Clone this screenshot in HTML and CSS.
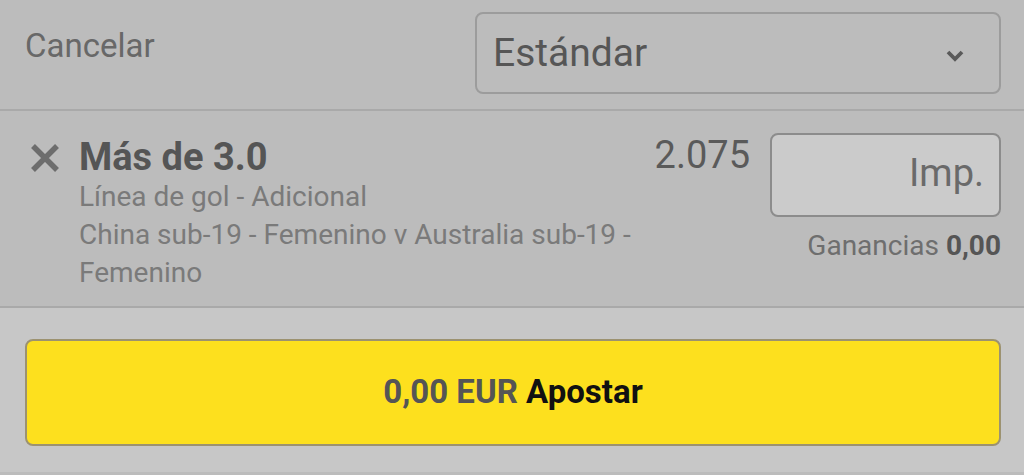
FILE: index.html
```html
<!DOCTYPE html>
<html lang="es">
<head>
    <meta charset="UTF-8">
    <meta name="viewport" content="width=device-width, initial-scale=1.0">
    <title>Boleto de apuestas</title>
    <link rel="stylesheet" href="styles.css">
</head>
<body>

<div class="slip">
    <div class="slip-header">
        <a class="cancel" href="#">Cancelar</a>
        <div class="bet-type">
            <span>Estándar</span>
            <svg class="chevron" width="20" height="13" viewBox="0 0 20 13">
                <path d="M3 3 L10 10 L17 3" fill="none" stroke="#5a5a5a" stroke-width="3.8"/>
            </svg>
        </div>
    </div>

    <div class="selection">
        <svg class="remove" width="30" height="28" viewBox="0 0 30 28">
            <path d="M3 2 L27 26 M27 2 L3 26" stroke="#6d6d6d" stroke-width="5.5"/>
        </svg>
        <div class="details">
            <div class="title">Más de 3.0</div>
            <div class="market">Línea de gol - Adicional</div>
            <div class="event">China sub-19 - Femenino v Australia sub-19 - Femenino</div>
        </div>
        <div class="odds">2.075</div>
        <div class="stake-col">
            <div class="stake">Imp.</div>
            <div class="returns">Ganancias <b>0,00</b></div>
        </div>
    </div>

    <div class="slip-footer">
        <button class="place-bet"><span class="amount">0,00 EUR</span> Apostar</button>
    </div>
</div>

</body>
</html>
```

FILE: styles.css
```css
body {
    margin: 0;
    font-family: Roboto, "Noto Sans", Arial, sans-serif;
    background-color: #bcbcbc;
    width: 1024px;
    height: 475px;
    overflow: hidden;
}

.slip-header {
    display: flex;
    justify-content: space-between;
    align-items: flex-start;
    height: 111px;
    padding: 12px 23px 0 25px;
    box-sizing: border-box;
    border-bottom: 2px solid #a9a9a9;
}

.cancel {
    color: #686868;
    font-size: 33px;
    text-decoration: none;
    margin-top: 14px;
}

.bet-type {
    width: 526px;
    height: 82px;
    box-sizing: border-box;
    border: 2px solid #9c9c9c;
    border-radius: 8px;
    display: flex;
    align-items: center;
    justify-content: space-between;
    padding: 0 34px 0 16px;
    color: #565656;
    font-size: 39px;
}

.chevron {
    margin-top: 4px;
}

.selection {
    display: flex;
    align-items: flex-start;
    height: 197px;
    box-sizing: border-box;
    padding: 24px 23px 0 30px;
    border-bottom: 2px solid #a9a9a9;
}

.remove {
    margin-top: 9px;
    flex: none;
}

.details {
    margin-left: 19px;
    width: 580px;
}

.title {
    font-size: 38px;
    font-weight: bold;
    color: #555;
    line-height: 44px;
}

.market,
.event {
    font-size: 28px;
    color: #7a7a7a;
    line-height: 38px;
}

.market {
    margin-top: -1px;
}

.odds {
    flex: 1;
    text-align: right;
    font-size: 38px;
    color: #5a5a5a;
    margin-top: -2px;
    margin-right: 20px;
}

.stake-col {
    width: 231px;
    margin-top: -2px;
    display: flex;
    flex-direction: column;
    align-items: flex-end;
}

.stake {
    width: 231px;
    height: 84px;
    box-sizing: border-box;
    background-color: #cbcbcb;
    border: 2px solid #8c8c8c;
    border-radius: 8px;
    text-align: right;
    padding: 16px 15px 0 0;
    font-size: 38px;
    color: #6a6a6a;
}

.returns {
    margin-top: 12px;
    font-size: 28px;
    color: #6e6e6e;
}

.returns b {
    color: #555;
}

.slip-footer {
    background-color: #c7c7c7;
    height: 164px;
    padding: 31px 23px 0 25px;
    box-sizing: border-box;
}

.place-bet {
    width: 100%;
    height: 107px;
    padding-bottom: 4px;
    background-color: #fde01e;
    border: 2px solid #9c9270;
    border-radius: 8px;
    font-family: Roboto, "Noto Sans", Arial, sans-serif;
    font-size: 33px;
    font-weight: bold;
    color: #111;
    cursor: pointer;
}

.place-bet .amount {
    color: #555;
}
```
